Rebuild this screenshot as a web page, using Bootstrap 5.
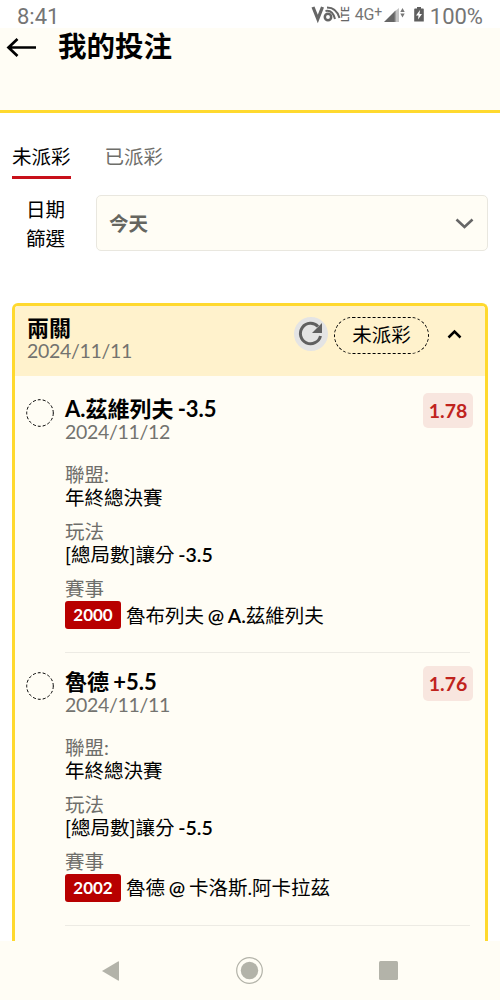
<!DOCTYPE html>
<html lang="zh-Hant">
<head>
<meta charset="utf-8">
<meta name="viewport" content="width=device-width, initial-scale=1">
<title>我的投注</title>
<link href="https://cdn.jsdelivr.net/npm/bootstrap@5.3.0/dist/css/bootstrap.min.css" rel="stylesheet">
<style>
:root{--cream:#fffdf5;--gold:#ffd92e;--gray:#6e6e6a}
body{font-family:Lato,"Noto Sans CJK TC",sans-serif;font-weight:400;font-size:19.5px;line-height:23px;color:#000;background:#fff;height:1000px;overflow:hidden}
svg{display:block;flex:none}
b{font-weight:600}
.status{height:28px;padding:4px 17px 0 17px;font-family:Roboto,sans-serif;color:#757575;font-size:22px;line-height:25px;flex:none}
.net{font-size:16px;line-height:24px;letter-spacing:-.3px;margin:-1px 0 0 4px}
.net sup{font-size:14px;top:-.2em}
.topbar{height:85px;background:var(--cream);border-bottom:3px solid var(--gold);padding:3px 0 0 6px;flex:none}
.topbar h1{font-size:28.5px;line-height:32px;font-weight:700;margin:-1px 0 0 21px}
.tabs{padding:32px 12px 0;gap:34px;flex:none}
.tabs .nav-link{padding:0;height:34px;line-height:24px;color:var(--gray)}
.tabs .nav-link.active{color:#000;border-bottom:3px solid #c8101a}
.filter{padding:16px 12px 0 12px;flex:none}
.filter label{width:67px;line-height:29px;text-align:center;margin-right:17px}
.picker{height:56px;background:var(--cream);border:1px solid #e9e7df;border-radius:5px;padding:0 12px;font-weight:700;color:#666660}
.slip{margin:50px 12px 0;border:3px solid var(--gold);border-bottom:0;border-radius:6px 6px 0 0;background:var(--cream)}
.slip-head{height:70px;background:#fff2cc;padding:11px 12px 0;flex:none}
.headline{font-size:22px;line-height:24px;font-weight:700;word-spacing:-1.2px}
.slip-head .headline{margin-top:-1px}
.day{color:#73736f;line-height:22px;font-size:19.5px;letter-spacing:-.3px}
.state{width:95px;height:37px;border:1px dashed #000;border-radius:19px;line-height:34px;text-align:center}
.leg{padding:17px 12px 0 11px;height:272.5px;flex:none}
.leg-body{margin-left:11px;border-bottom:1.5px solid #edebe4;width:405px;height:260px}
.fact{word-spacing:-1.2px}
.odds{width:50px;height:35px;border-radius:5px;background:#f8e6df;color:#c0231d;font-weight:700;line-height:35px;text-align:center;margin-right:-3px}
.cap{color:var(--gray)}
.code{width:56px;height:28px;background:#b80000;color:#fff;border-radius:3px;font-weight:700;font-size:17px;line-height:28px;text-align:center}
.keys{height:59px;background:var(--cream);padding:0 102px;flex:none}
</style>
</head>
<body class="d-flex flex-column">
<div class="status d-flex justify-content-between">
  <span>8:41</span>
  <div class="d-flex">
    <svg width="40" height="20" viewBox="0 0 40 20" fill="none" stroke="#666"><path d="M2 3 6.800 15 11.500 3" stroke-width="3.200"/><circle cx="17" cy="13" r="3.200" stroke-width="2.500"/><path d="M14.500 7q7-1.500 9.500 8M16 3.500q9.500 0 12.500 10.500" stroke-width="2"/><text transform="translate(38 18) rotate(-90)" textLength="15.500" lengthAdjust="spacingAndGlyphs" font-size="10" font-weight="500" fill="#666" stroke="none">LTE</text></svg>
    <span class="net">4G<sup>+</sup></span>
    <svg style="margin-left:2px" width="21" height="20" viewBox="0 0 21 20"><path d="M0 18 10 8v10z" fill="#666"/><path d="M10 8v10h5V4z" fill="#c4c4c4"/><path d="M10 8v10h1.500V6.500z" fill="#777"/><path d="m18.500 4 2.200 4h-4.400zM18.500 13.500l2.200-4h-4.400z" fill="#777"/></svg>
    <svg style="margin-left:9px" width="10" height="20" viewBox="0 0 10 20"><path d="M1 4.500h2V3h4v1.500h2q.8 0 .8 1v12H.2v-12q0-1 .8-1z" fill="#5f5f5f"/><path d="M6 6 2 11.500h2.500l-.5 4 4-5.500H5.500z" fill="#fff"/></svg>
    <span style="margin-left:6px">100%</span>
  </div>
</div>
<header class="topbar d-flex align-items-start">
  <svg width="31" height="32" viewBox="0 0 31 32" fill="none" stroke="#000" stroke-width="2.700"><path d="M11.500 8 2.500 16.500l9 8.500M2.500 16.500H30"/></svg>
  <h1>我的投注</h1>
</header>
<nav class="nav tabs">
  <a class="nav-link active" href="#">未派彩</a>
  <a class="nav-link" href="#">已派彩</a>
</nav>
<div class="filter d-flex">
  <label>日期<br>篩選</label>
  <div class="picker flex-grow-1 d-flex align-items-center justify-content-between">
    <span>今天</span>
    <svg width="20" height="12" viewBox="0 0 20 12" fill="none" stroke="#666" stroke-width="2.600"><path d="m1.500 2.500 8 7.500 8-7.500"/></svg>
  </div>
</div>
<main class="slip flex-grow-1 d-flex flex-column overflow-hidden">
  <div class="slip-head d-flex">
    <div class="flex-grow-1"><div class="headline">兩關</div><div class="day">2024/11/11</div></div>
    <svg width="34" height="34" viewBox="0 0 34 34"><circle cx="17" cy="17" r="17" fill="#e4e4e4"/><path d="M26.500 19A10.200 10.200 0 1 1 24 9.500" fill="none" stroke="#606060" stroke-width="3"/><path d="M28 6v10H18z" fill="#606060"/></svg>
    <div class="state" style="margin-left:6px">未派彩</div>
    <svg style="margin:11px 11px 0 18px" width="15" height="12" viewBox="0 0 15 12" fill="none" stroke="#000" stroke-width="2.500"><path d="m1.500 9.500 6-6 6 6"/></svg>
  </div>
  <section class="leg d-flex">
    <svg style="margin-top:6px" width="28" height="28"><circle cx="14" cy="14" r="13.300" fill="none" stroke="#000" stroke-dasharray="3 2"/></svg>
    <div class="leg-body">
      <div class="d-flex justify-content-between"><div style="padding-top:4px"><div class="headline">A.茲維列夫 -3.5</div><div class="day">2024/11/12</div></div><div class="odds">1.78</div></div>
      <div class="cap" style="margin-top:20px">聯盟:</div><div>年終總決賽</div>
      <div class="cap mt-2" style="padding-top:3px">玩法</div><div class="fact">[總局數]讓分 <b>-3.5</b></div>
      <div class="cap mt-2" style="padding-top:3px">賽事</div>
      <div class="fact d-flex align-items-center" style="padding-top:1px"><span class="code">2000</span><span style="margin-left:5px">魯布列夫 <b>@ A.</b>茲維列夫</span></div>
    </div>
  </section>
  <section class="leg d-flex">
    <svg style="margin-top:6px" width="28" height="28"><circle cx="14" cy="14" r="13.300" fill="none" stroke="#000" stroke-dasharray="3 2"/></svg>
    <div class="leg-body">
      <div class="d-flex justify-content-between"><div style="padding-top:4px"><div class="headline">魯德 +5.5</div><div class="day">2024/11/11</div></div><div class="odds">1.76</div></div>
      <div class="cap" style="margin-top:20px">聯盟:</div><div>年終總決賽</div>
      <div class="cap mt-2" style="padding-top:3px">玩法</div><div class="fact">[總局數]讓分 <b>-5.5</b></div>
      <div class="cap mt-2" style="padding-top:3px">賽事</div>
      <div class="fact d-flex align-items-center" style="padding-top:1px"><span class="code">2002</span><span style="margin-left:5px">魯德 <b>@</b> 卡洛斯.阿卡拉茲</span></div>
    </div>
  </section>
</main>
<footer class="keys d-flex align-items-center justify-content-between">
  <svg width="17" height="20" viewBox="0 0 17 20"><path d="M0 10 16 .5q1-.5 1 .5v18q0 1-1 .5z" fill="#b3b3a9"/></svg>
  <svg width="27" height="27" viewBox="0 0 27 27"><circle cx="13.500" cy="13.500" r="12.800" fill="none" stroke="#b3b3a9" stroke-width="1.200"/><circle cx="13.500" cy="13.500" r="8.700" fill="#b3b3a9"/></svg>
  <svg width="19" height="19"><rect width="19" height="19" rx="1.500" fill="#b3b3a9"/></svg>
</footer>
<script src="https://cdn.jsdelivr.net/npm/bootstrap@5.3.0/dist/js/bootstrap.bundle.min.js"></script>
</body>
</html>
